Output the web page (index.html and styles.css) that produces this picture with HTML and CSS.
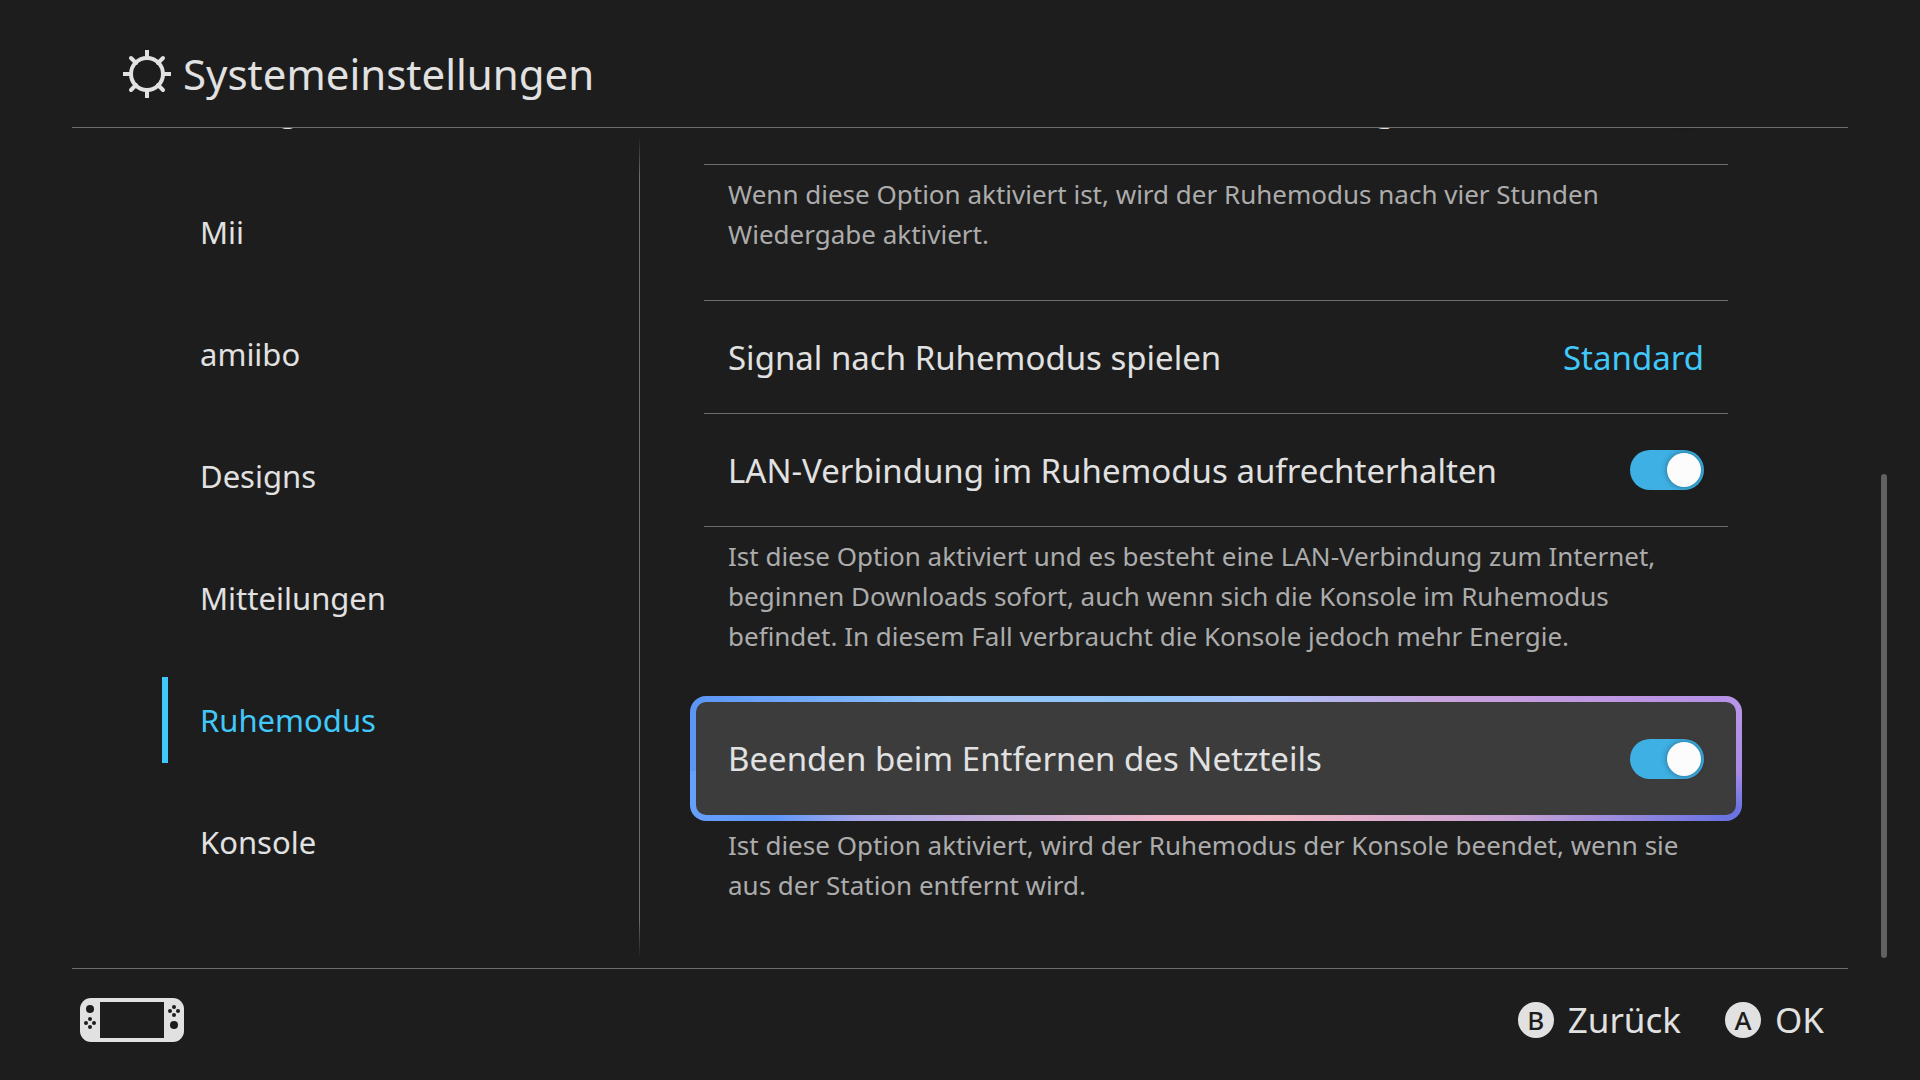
FILE: index.html
```html
<!DOCTYPE html>
<html lang="de">

<head>
  <meta charset="UTF-8" />
  <meta name="viewport" content="width=device-width, initial-scale=1.0" />
  <title>Systemeinstellungen</title>
  <link rel="stylesheet" href="styles.css">
</head>

<body>
  <header class="header">
    <svg class="header-icon" viewBox="-24 -24 48 48" fill="none" stroke="currentColor" stroke-width="4">
      <circle r="16" />
      <path d="M0-16V-24M0 16V24M-16 0H-24M16 0H24" />
      <path stroke-linecap="round" d="M-11-11L-16-16M11-11L16-16M-11 11L-16 16M11 11L16 16" />
    </svg>
    <h1>Systemeinstellungen</h1>
  </header>

  <main class="main">
    <nav class="sidebar">
      <a href="#">Anzeige</a>
      <a href="#">Mii</a>
      <a href="#">amiibo</a>
      <a href="#">Designs</a>
      <a href="#">Mitteilungen</a>
      <a href="#" class="active">Ruhemodus</a>
      <a href="#">Konsole</a>
    </nav>
    <div class="divider"></div>
    <section class="settings">
      <label class="row" for="media-sleep">
        Auto-Ruhemodus während Medienwiedergabe
        <input type="checkbox" class="toggle" id="media-sleep" checked />
      </label>
      <p class="hint">Wenn diese Option aktiviert ist, wird der Ruhemodus nach vier Stunden<br>Wiedergabe aktiviert.</p>
      <button type="button" class="row">
        Signal nach Ruhemodus spielen
        <span class="value">Standard</span>
      </button>
      <label class="row" for="lan">
        LAN-Verbindung im Ruhemodus aufrechterhalten
        <input type="checkbox" class="toggle" id="lan" checked />
      </label>
      <p class="hint">Ist diese Option aktiviert und es besteht eine LAN-Verbindung zum Internet,<br>beginnen Downloads sofort, auch wenn sich die Konsole im Ruhemodus<br>befindet. In diesem Fall verbraucht die Konsole jedoch mehr Energie.</p>
      <label class="row focused" for="power">
        Beenden beim Entfernen des Netzteils
        <input type="checkbox" class="toggle" id="power" checked />
      </label>
      <p class="hint">Ist diese Option aktiviert, wird der Ruhemodus der Konsole beendet, wenn sie<br>aus der Station entfernt wird.</p>
    </section>
    <div class="scrollbar"></div>
  </main>

  <footer class="footer">
    <svg class="console-icon" viewBox="0 0 104 44">
      <rect width="104" height="44" rx="11" fill="#e1e1e1" />
      <g fill="#1d1d1d">
        <rect x="20" y="4" width="64" height="36" />
        <circle cx="10" cy="11" r="4" />
        <circle cx="10" cy="21" r="2" />
        <circle cx="10" cy="29" r="2" />
        <circle cx="6" cy="25" r="2" />
        <circle cx="14" cy="25" r="2" />
        <circle cx="94" cy="27" r="4" />
        <circle cx="94" cy="9" r="2" />
        <circle cx="94" cy="17" r="2" />
        <circle cx="90" cy="13" r="2" />
        <circle cx="98" cy="13" r="2" />
      </g>
    </svg>
    <div class="actions">
      <button type="button" class="action"><span class="key">B</span>Zurück</button>
      <button type="button" class="action"><span class="key">A</span>OK</button>
    </div>
  </footer>
</body>

</html>
```
FILE: styles.css
```css
* {
  box-sizing: border-box;
}

body {
  display: flex;
  flex-direction: column;
  height: 100vh;
  margin: 0;
  overflow: hidden;
  background: #1d1d1d;
  color: #e1e1e1;
  font-family: "Noto Sans", sans-serif;
}

button {
  border: 0;
  background: none;
  color: inherit;
  font-family: inherit;
  cursor: pointer;
}

.header {
  display: flex;
  align-items: center;
  gap: 12px;
  margin: 0 72px;
  padding: 44px 51px 23px;
  border-bottom: 1px solid #6c6c6c;
}

.header-icon {
  width: 48px;
  height: 48px;
}

h1 {
  margin: 0;
  font-size: 42px;
  font-weight: 400;
  line-height: 60px;
}

/* both columns are scrolled to their end */
.main {
  display: flex;
  flex: 1;
  min-height: 0;
  padding: 0 33px 0 72px;
}

.sidebar {
  display: flex;
  flex-direction: column;
  justify-content: flex-end;
  width: 567px;
  padding: 0 90px 65px;
  overflow: hidden;
}

.sidebar a {
  flex-shrink: 0;
  margin: 18px 0;
  padding-left: 32px;
  border-left: 6px solid transparent;
  color: inherit;
  font-size: 31px;
  line-height: 86px;
  text-decoration: none;
}

.sidebar a.active {
  border-image: linear-gradient(#41c8fa, #41c8fa) 1;
  color: #41c8fa;
}

.divider {
  width: 1px;
  margin: 8px 0 10px;
  background: linear-gradient(transparent, #6c6c6c 40px, #6c6c6c calc(100% - 40px), transparent);
}

.settings {
  display: flex;
  flex: 1;
  flex-direction: column;
  justify-content: flex-end;
  padding: 0 139px 17px 50px;
  overflow: hidden;
}

.row {
  display: flex;
  flex-shrink: 0;
  align-items: center;
  justify-content: space-between;
  height: 113px;
  margin: 0 14px;
  padding: 0 24px;
  border-top: 1px solid #6c6c6c;
  font-size: 33px;
}

.value {
  color: #41c8fa;
}

.row.focused {
  height: 125px;
  margin: -6px 0;
  padding: 0 32px;
  border: 6px solid transparent;
  border-radius: 16px;
  background:
    linear-gradient(#3c3c3c, #3c3c3c) padding-box,
    linear-gradient(#b795e6 15%, #a98be6 60%, #6c74e2 90%) right / 16px 100% no-repeat border-box,
    linear-gradient(90deg, #5b95f5, #8fc5fa 25%, #93c4fa 45%, #a9c0f6 55%, #c8a2dc 72%, #b58fe6) top / 100% 60% no-repeat border-box,
    linear-gradient(90deg, #67a0fa, #5f97f8 8%, #a5a6ea 16%, #f0b6c8 45%, #f2b8c4 55%, #c9a2d6 78%, #6c74e2 98%) bottom / 100% 60% no-repeat border-box;
}

.hint {
  flex-shrink: 0;
  margin: 0 14px;
  padding: 9px 24px 46px;
  border-top: 1px solid #6c6c6c;
  color: #acacac;
  font-size: 26px;
  line-height: 40px;
  white-space: nowrap;
}

.row.focused + .hint {
  border-color: transparent;
}

.toggle {
  appearance: none;
  display: flex;
  align-items: center;
  width: 74px;
  height: 40px;
  margin: 0;
  padding: 3px;
  border-radius: 20px;
  background: #555;
}

.toggle:checked {
  justify-content: flex-end;
  background: #3eb0e4;
}

.toggle::before {
  content: "";
  width: 34px;
  height: 34px;
  border-radius: 50%;
  background: #fcfcfc;
  box-shadow: 0 0 6px rgba(0, 0, 0, 0.4);
}

.scrollbar {
  align-self: flex-end;
  width: 6px;
  height: 484px;
  margin-bottom: 10px;
  border-radius: 3px;
  background: #616161;
}

.footer {
  display: flex;
  align-items: center;
  justify-content: space-between;
  margin: 0 72px;
  padding: 29px 24px 38px 8px;
  border-top: 1px solid #6c6c6c;
}

.console-icon {
  width: 104px;
  height: 44px;
}

.actions {
  display: flex;
  gap: 44px;
}

.action {
  display: flex;
  align-items: center;
  gap: 14px;
  padding: 0;
  font-size: 35px;
  line-height: 44px;
}

.key {
  width: 36px;
  height: 36px;
  border-radius: 50%;
  background: #e1e1e1;
  color: #1d1d1d;
  font-size: 26px;
  font-weight: 500;
  line-height: 36px;
  text-align: center;
}
```
